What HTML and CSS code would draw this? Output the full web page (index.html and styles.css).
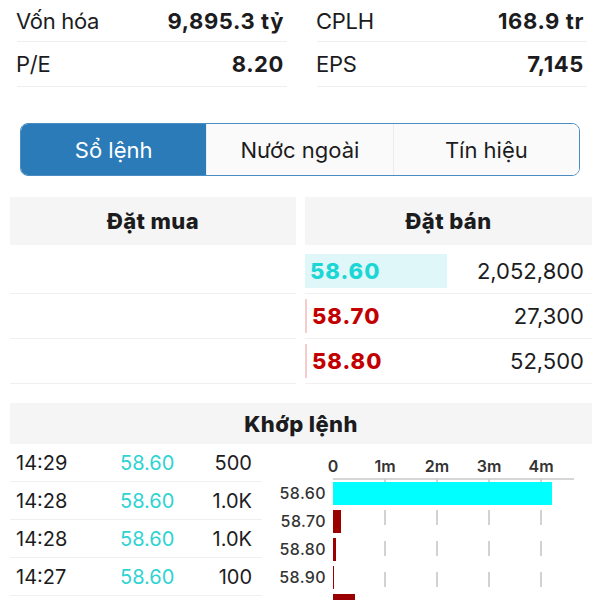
FILE: index.html
```html
<!DOCTYPE html>
<html lang="vi">
<head>
    <meta charset="UTF-8">
    <meta name="viewport" content="width=device-width, initial-scale=1.0">
    <title>Sổ lệnh</title>
    <link rel="stylesheet" href="styles.css">
</head>
<body>
    <div class="stats">
        <div class="stat-row"><span>Vốn hóa</span><strong>9,895.3 tỷ</strong></div>
        <div class="stat-row"><span>CPLH</span><strong>168.9 tr</strong></div>
        <div class="stat-row"><span>P/E</span><strong>8.20</strong></div>
        <div class="stat-row"><span>EPS</span><strong>7,145</strong></div>
    </div>

    <div class="tabs">
        <div class="tab active">Sổ lệnh</div>
        <div class="tab">Nước ngoài</div>
        <div class="tab">Tín hiệu</div>
    </div>

    <div class="book">
        <div class="book-col">
            <div class="section-head">Đặt mua</div>
            <div class="book-row"></div>
            <div class="book-row"></div>
            <div class="book-row"></div>
        </div>
        <div class="book-col">
            <div class="section-head">Đặt bán</div>
            <div class="book-row">
                <div class="price-cell ref" style="width: 142px">58.60</div>
                <div class="vol">2,052,800</div>
            </div>
            <div class="book-row">
                <div class="price-cell up" style="width: 2px">58.70</div>
                <div class="vol">27,300</div>
            </div>
            <div class="book-row">
                <div class="price-cell up" style="width: 2px">58.80</div>
                <div class="vol">52,500</div>
            </div>
        </div>
    </div>

    <div class="section-head match-head">Khớp lệnh</div>
    <div class="match">
        <div class="trades">
            <div class="trade"><span>14:29</span><span class="t-price">58.60</span><span class="t-vol">500</span></div>
            <div class="trade"><span>14:28</span><span class="t-price">58.60</span><span class="t-vol">1.0K</span></div>
            <div class="trade"><span>14:28</span><span class="t-price">58.60</span><span class="t-vol">1.0K</span></div>
            <div class="trade"><span>14:27</span><span class="t-price">58.60</span><span class="t-vol">100</span></div>
        </div>
        <svg class="chart" width="330" height="156" viewBox="0 0 330 156">
            <g class="grid">
                <line x1="123" y1="35" x2="123" y2="156"/>
                <line x1="175" y1="35" x2="175" y2="156"/>
                <line x1="227" y1="35" x2="227" y2="156"/>
                <line x1="279" y1="35" x2="279" y2="156"/>
            </g>
            <line class="axis" x1="71" y1="35" x2="312" y2="35"/>
            <g class="ticks">
                <text x="71" y="28">0</text>
                <text x="123" y="28">1m</text>
                <text x="175" y="28">2m</text>
                <text x="227" y="28">3m</text>
                <text x="279" y="28">4m</text>
            </g>
            <rect x="71" y="38" width="219" height="23" fill="#00ffff"/>
            <rect x="71" y="66" width="8" height="23" fill="#9b0000"/>
            <rect x="71" y="94" width="3" height="23" fill="#9b0000"/>
            <rect x="71" y="122" width="1" height="23" fill="#9b0000"/>
            <rect x="71" y="150" width="22" height="23" fill="#9b0000"/>
            <g class="labels">
                <text x="64" y="55">58.60</text>
                <text x="64" y="83">58.70</text>
                <text x="64" y="111">58.80</text>
                <text x="64" y="139">58.90</text>
            </g>
        </svg>
    </div>
</body>
</html>
```

FILE: styles.css
```css
body {
    margin: 0;
    font-family: Inter, "Noto Sans", sans-serif;
    color: #1c1c1e;
    background-color: #fff;
    overflow: hidden;
}
.stats {
    display: grid;
    grid-template-columns: 270px 270px;
    column-gap: 30px;
    padding: 0 13px 0 17px;
}
.stat-row {
    display: flex;
    justify-content: space-between;
    align-items: center;
    height: 44px;
    font-size: 22px;
    border-bottom: 1px solid #eeeeee;
}
.stat-row:nth-child(-n+2) {
    height: 41px;
}
.stat-row span {
    margin-left: -1px;
    letter-spacing: -0.3px;
}
.stat-row strong {
    font-weight: 700;
    margin-right: 3px;
    letter-spacing: 0.6px;
}
.tabs {
    display: flex;
    margin: 36px 20px 0;
    height: 51px;
    border: 1.5px solid #4a8dc4;
    border-radius: 8px;
    overflow: hidden;
}
.tab {
    flex: 1;
    display: flex;
    align-items: center;
    justify-content: center;
    font-size: 22px;
    background-color: #fafafa;
    border-left: 1px solid #ececec;
}
.tab.active {
    background-color: #2b7bb9;
    color: #fff;
    border-left: none;
}
.book {
    display: grid;
    grid-template-columns: 286px 287px;
    column-gap: 9px;
    padding: 21px 8px 0 10px;
}
.section-head {
    display: flex;
    align-items: center;
    justify-content: center;
    height: 48px;
    background-color: #f5f5f5;
    font-size: 22px;
    font-weight: 800;
    letter-spacing: 0.4px;
    margin-bottom: 4px;
}
.book-row {
    display: flex;
    justify-content: space-between;
    align-items: center;
    height: 44px;
    border-bottom: 1px solid #f0f0f0;
}
.price-cell {
    position: relative;
    height: 34px;
    display: flex;
    align-items: center;
    padding-left: 5px;
    font-size: 22px;
    font-weight: 800;
    letter-spacing: 1px;
    white-space: nowrap;
    box-sizing: border-box;
}
.price-cell.ref {
    background-color: #e0f7f9;
    color: #1cd6d6;
}
.price-cell.up {
    color: #c20000;
    border-left: 2px solid #f6cccc;
    padding-left: 5px;
}
.vol {
    font-size: 22px;
    margin-right: 8px;
}
.match-head {
    margin: 19px 8px 0 10px;
    height: 41px;
    margin-bottom: 0;
}
.match {
    display: grid;
    grid-template-columns: 252px 330px;
    padding-left: 10px;
}
.trade {
    display: grid;
    grid-template-columns: 104px 78px 1fr;
    align-items: center;
    height: 37px;
    padding: 0 10px 0 6px;
    font-size: 20px;
    border-bottom: 1px solid #f0f0f0;
}
.t-price {
    color: #2ed3d3;
}
.t-vol {
    text-align: right;
}
.chart {
    display: block;
}
.chart text {
    font-family: Inter, sans-serif;
    font-size: 16px;
    font-weight: 600;
    fill: #333;
}
.ticks text {
    text-anchor: middle;
}
.labels text {
    text-anchor: end;
    font-weight: 500;
    letter-spacing: 0.4px;
}
.axis {
    stroke: #c8c8c8;
    stroke-width: 1.5;
}
.grid line {
    stroke: #c4c4c4;
    stroke-width: 1.5;
    stroke-dasharray: 15 16;
}
```
